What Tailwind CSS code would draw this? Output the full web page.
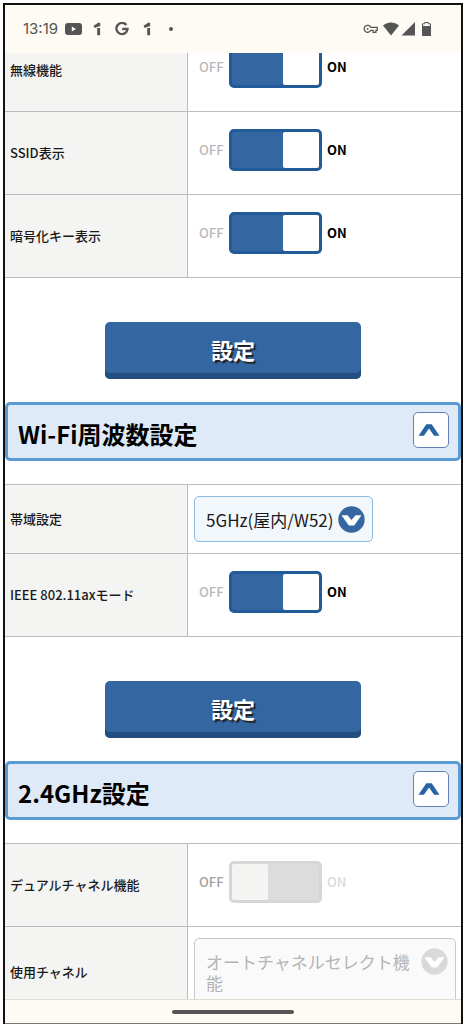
<!DOCTYPE html>
<html lang="ja">
<head>
  <meta charset="UTF-8" />
  <meta name="viewport" content="width=device-width, initial-scale=1.0" />
  <title>無線LAN設定</title>
  <script src="https://cdn.jsdelivr.net/npm/@tailwindcss/browser@4"></script>
</head>
<body class="bg-white pt-[3px] pl-[3px] pr-px h-screen overflow-hidden font-['Noto_Sans_CJK_JP',sans-serif] text-[#1a1a1a]">

  <div class="h-full flex flex-col border-2 border-b-0 border-[#111]">

    <!-- ステータスバー -->
    <header class="relative z-10 h-12 shrink-0 bg-[#fefbf5] flex items-center pl-[18px] pr-[30px] text-[#555]">
      <span class="font-['Inter',sans-serif] text-[15px] leading-5 w-[42px]">13:19</span>
      <svg class="w-[17px] h-[14px]" viewBox="0 0 17 14" fill="currentColor"><path fill-rule="evenodd" d="M3 1h11a3 3 0 0 1 3 3v6a3 3 0 0 1-3 3H3a3 3 0 0 1-3-3V4a3 3 0 0 1 3-3zm3.800 3.500v5l4.200-2.500z"/></svg>
      <svg class="w-2 h-[14px] ml-[11px]" viewBox="0 0 8 14" fill="currentColor"><path d="M0.500 3.800 5.600 0.600 7.200 1v3L1.600 6zM4.200 6h2.900v7.200H4.200z"/></svg>
      <svg class="w-[14px] h-[14px] ml-[14px]" viewBox="0 0 14 14" fill="none" stroke="currentColor" stroke-width="2.300"><path d="M11.400 3A5.600 5.600 0 1 0 12.600 7H7.200"/></svg>
      <svg class="w-2 h-[14px] ml-[14px]" viewBox="0 0 8 14" fill="currentColor"><path d="M0.500 3.800 5.600 0.600 7.200 1v3L1.600 6zM4.200 6h2.900v7.200H4.200z"/></svg>
      <span class="size-1 rounded-full bg-[#555] ml-[18px]"></span>
      <svg class="w-[15px] h-[10px] ml-auto" viewBox="0 0 15 10" fill="none" stroke="currentColor" stroke-width="1.300"><path d="M7.800 3.300h6.400v3h-1.300v2h-2.800v-2H7.800a3.500 3.500 0 1 1 0-3z"/><circle cx="4.600" cy="4.900" r="0.900" fill="currentColor" stroke="none"/></svg>
      <svg class="w-4 h-[14px] ml-[5px]" viewBox="0 0 16 14" fill="currentColor"><path d="M0 3.600C4.800-0.500 11.200-0.500 16 3.600L8 13.500z"/></svg>
      <svg class="w-[14px] h-[14px] ml-[2px]" viewBox="0 0 14 14" fill="currentColor"><path d="M14 0v13.500H0.500z"/></svg>
      <svg class="w-[9px] h-[14px] ml-[7px]" viewBox="0 0 9 14" fill="none" stroke="currentColor"><path d="M2.700 0.500h3.600v1.300h2.200v11.700h-8V1.800h2.200z"/><path d="M0.500 4.500h8v9h-8z" fill="currentColor"/></svg>
    </header>

    <!-- 設定画面（スクロール途中） -->
    <main class="flex-1 min-h-0 overflow-hidden">
      <div class="-mt-6">

        <section>
          <div class="flex border-b border-[#bcbcbc]">
            <label for="wireless" class="w-[183px] shrink-0 flex items-center bg-[#f4f4f3] border-r border-[#bcbcbc] pl-[5px] text-[13px] leading-5 font-medium">無線機能</label>
            <div class="flex-1 flex items-center pt-[17px] pb-[23px] pl-[11px] text-[13px] leading-5">
              <span class="w-[30px] font-medium text-[#b8b8b8]">OFF</span>
              <input type="checkbox" id="wireless" checked class="appearance-none w-[93px] h-[42px] border-[3px] border-[#225a9a] rounded-[5px] bg-[#3466a1] flex justify-end before:w-9 before:h-9 before:rounded-xs before:bg-white">
              <span class="ml-[5px] font-bold text-black">ON</span>
            </div>
          </div>
          <div class="flex border-b border-[#bcbcbc]">
            <label for="ssid" class="w-[183px] shrink-0 flex items-center bg-[#f4f4f3] border-r border-[#bcbcbc] pl-[5px] text-[13px] leading-5 font-medium">SSID表示</label>
            <div class="flex-1 flex items-center pt-[17px] pb-[23px] pl-[11px] text-[13px] leading-5">
              <span class="w-[30px] font-medium text-[#b8b8b8]">OFF</span>
              <input type="checkbox" id="ssid" checked class="appearance-none w-[93px] h-[42px] border-[3px] border-[#225a9a] rounded-[5px] bg-[#3466a1] flex justify-end before:w-9 before:h-9 before:rounded-xs before:bg-white">
              <span class="ml-[5px] font-bold text-black">ON</span>
            </div>
          </div>
          <div class="flex border-b border-[#bcbcbc]">
            <label for="key" class="w-[183px] shrink-0 flex items-center bg-[#f4f4f3] border-r border-[#bcbcbc] pl-[5px] text-[13px] leading-5 font-medium">暗号化キー表示</label>
            <div class="flex-1 flex items-center pt-[17px] pb-[23px] pl-[11px] text-[13px] leading-5">
              <span class="w-[30px] font-medium text-[#b8b8b8]">OFF</span>
              <input type="checkbox" id="key" checked class="appearance-none w-[93px] h-[42px] border-[3px] border-[#225a9a] rounded-[5px] bg-[#3466a1] flex justify-end before:w-9 before:h-9 before:rounded-xs before:bg-white">
              <span class="ml-[5px] font-bold text-black">ON</span>
            </div>
          </div>
          <button type="button" class="block w-[56%] h-[57px] mx-auto mt-11 mb-[23px] pb-[3px] rounded-[5px] bg-[#3466a1] shadow-[inset_0_-6px_0_#234e80] text-white text-[22px] leading-8 font-bold [text-shadow:2px_2px_1px_#222]">設定</button>
        </section>

        <!-- Wi-Fi周波数設定 -->
        <section>
          <div class="flex items-center justify-between h-[59px] mb-[23px] pl-[10px] pr-[9px] border-[3px] border-[#5b9bd3] rounded-[5px] bg-[#deeaf7]">
            <h2 class="pt-[5px] text-[24px] leading-8 font-bold text-black">Wi-Fi周波数設定</h2>
            <button type="button" aria-label="閉じる" class="size-9 mb-1 border border-[#6580b5] rounded-[5px] bg-white flex items-center justify-center">
              <svg class="w-[22px] h-3 mr-1" viewBox="0 0 22 12" fill="#2863a3"><path d="M0.500 11.800 8.300 0.300h5.400l7.800 11.500h-5.400L11 4.500 5.900 11.800z"/></svg>
            </button>
          </div>
          <div class="flex border-y border-[#bcbcbc]">
            <label for="band" class="w-[183px] shrink-0 flex items-center bg-[#f4f4f3] border-r border-[#bcbcbc] pl-[5px] text-[13px] leading-5 font-medium">帯域設定</label>
            <div class="flex-1 py-[11px] px-[6px]">
              <div class="relative w-[179px]">
                <select id="band" class="block appearance-none w-full h-[46px] pl-[11px] pr-9 border border-[#8db9e3] rounded-[5px] bg-[#f2f7fc] text-[17px] leading-[21px] text-[#1a1a1a]">
                  <option>5GHz(屋内/W52)</option>
                </select>
                <svg class="absolute right-2 top-[10px] size-[27px] pointer-events-none" viewBox="0 0 27 27"><circle cx="13.500" cy="13.500" r="13.200" fill="#3466a1"/><path d="M3.500 9.200h6l4 4.800 4-4.800h6l-7.300 10.300h-5.400z" fill="#fff"/></svg>
              </div>
            </div>
          </div>
          <div class="flex border-b border-[#bcbcbc]">
            <label for="ax" class="w-[183px] shrink-0 flex items-center bg-[#f4f4f3] border-r border-[#bcbcbc] pl-[5px] text-[13px] leading-5 font-medium">IEEE 802.11axモード</label>
            <div class="flex-1 flex items-center pt-[17px] pb-[23px] pl-[11px] text-[13px] leading-5">
              <span class="w-[30px] font-medium text-[#b8b8b8]">OFF</span>
              <input type="checkbox" id="ax" checked class="appearance-none w-[93px] h-[42px] border-[3px] border-[#225a9a] rounded-[5px] bg-[#3466a1] flex justify-end before:w-9 before:h-9 before:rounded-xs before:bg-white">
              <span class="ml-[5px] font-bold text-black">ON</span>
            </div>
          </div>
          <button type="button" class="block w-[56%] h-[57px] mx-auto mt-11 mb-[23px] pb-[3px] rounded-[5px] bg-[#3466a1] shadow-[inset_0_-6px_0_#234e80] text-white text-[22px] leading-8 font-bold [text-shadow:2px_2px_1px_#222]">設定</button>
        </section>

        <!-- 2.4GHz設定 -->
        <section>
          <div class="flex items-center justify-between h-[59px] mb-[23px] pl-[10px] pr-[9px] border-[3px] border-[#5b9bd3] rounded-[5px] bg-[#deeaf7]">
            <h2 class="pt-[5px] text-[24px] leading-8 font-bold text-black">2.4GHz設定</h2>
            <button type="button" aria-label="閉じる" class="size-9 mb-1 border border-[#6580b5] rounded-[5px] bg-white flex items-center justify-center">
              <svg class="w-[22px] h-3 mr-1" viewBox="0 0 22 12" fill="#2863a3"><path d="M0.500 11.800 8.300 0.300h5.400l7.800 11.500h-5.400L11 4.500 5.900 11.800z"/></svg>
            </button>
          </div>
          <div class="flex border-y border-[#bcbcbc]">
            <label for="dual" class="w-[183px] shrink-0 flex items-center bg-[#f4f4f3] border-r border-[#bcbcbc] pl-[5px] text-[13px] leading-5 font-medium">デュアルチャネル機能</label>
            <div class="flex-1 flex items-center pt-[17px] pb-[23px] pl-[11px] text-[13px] leading-5">
              <span class="w-[30px] font-medium text-[#a0a0a0]">OFF</span>
              <input type="checkbox" id="dual" disabled class="appearance-none w-[93px] h-[42px] border-[3px] border-[#d6d6d6] rounded-[5px] bg-[#dcdcdc] flex before:w-9 before:h-9 before:rounded-xs before:bg-[#f4f4f3]">
              <span class="ml-[5px] font-medium text-[#dadada]">ON</span>
            </div>
          </div>
          <div class="flex border-b border-[#bcbcbc]">
            <label for="channel" class="w-[183px] shrink-0 flex items-center bg-[#f4f4f3] border-r border-[#bcbcbc] pl-[5px] text-[13px] leading-5 font-medium">使用チャネル</label>
            <div class="flex-1 py-[11px] pl-[6px] pr-[5px]">
              <!-- 長い項目名は折り返して表示し、select本体は上に重ねる -->
              <div class="relative pl-[11px] pr-10 py-3 border border-[#c8c8c8] rounded-[5px] bg-[#fafafa] text-[17px] leading-[21px] text-[#b4b4b4]">
                <span aria-hidden="true">オートチャネルセレクト機能</span>
                <svg class="absolute right-[7px] top-[9px] size-[27px]" viewBox="0 0 27 27"><circle cx="13.500" cy="13.500" r="13.200" fill="#d9d9d9"/><path d="M3.500 9.200h6l4 4.800 4-4.800h6l-7.300 10.300h-5.400z" fill="#fff"/></svg>
                <select id="channel" disabled class="absolute inset-0 w-full h-full opacity-0">
                  <option>オートチャネルセレクト機能</option>
                </select>
              </div>
            </div>
          </div>
        </section>

      </div>
    </main>

    <!-- ナビゲーションバー -->
    <footer class="h-[25px] shrink-0 border-t border-t-[#deddd2] border-b border-b-[#777] bg-[#fefbf5] flex items-center justify-center">
      <span class="w-[122px] h-1 rounded-full bg-[#555]"></span>
    </footer>

  </div>

</body>
</html>
